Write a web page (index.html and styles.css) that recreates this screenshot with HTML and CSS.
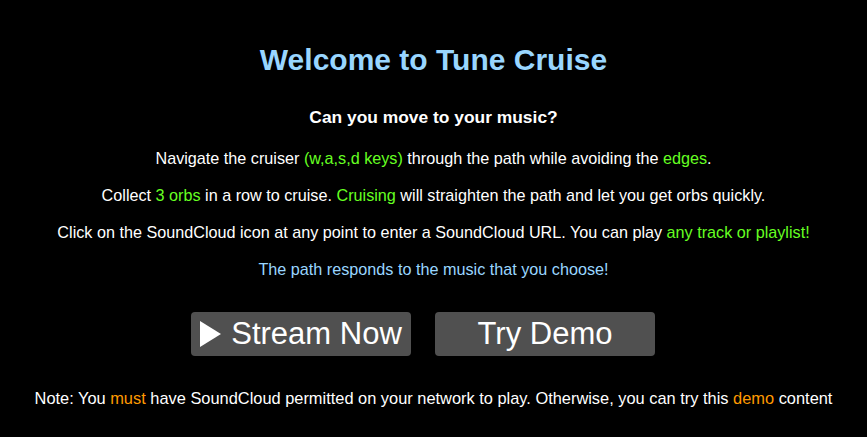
FILE: index.html
```html
<!DOCTYPE html>
<html>
<head>
<meta charset="utf-8">
<link rel="stylesheet" href="styles.css">
</head>
<body>
<main class="intro">
  <h1 class="title">Welcome to Tune Cruise</h1>
  <h2 class="subtitle">Can you move to your music?</h2>
  <p class="line first">Navigate the cruiser <span class="green">(w,a,s,d keys)</span> through the path while avoiding the <span class="green">edges</span>.</p>
  <p class="line">Collect <span class="green">3 orbs</span> in a row to cruise. <span class="green">Cruising</span> will straighten the path and let you get orbs quickly.</p>
  <p class="line">Click on the SoundCloud icon at any point to enter a SoundCloud URL. You can play <span class="green">any track or playlist!</span></p>
  <p class="line blue">The path responds to the music that you choose!</p>
  <div class="buttons">
    <button class="btn"><svg class="play" width="21" height="26" viewBox="0 0 21 26"><polygon points="0,0 21,13 0,26" fill="#fff"/></svg>Stream Now</button>
    <button class="btn">Try Demo</button>
  </div>
  <p class="note">Note: You <span class="orange">must</span> have SoundCloud permitted on your network to play. Otherwise, you can try this <span class="orange">demo</span> content</p>
</main>
</body>
</html>
```
FILE: styles.css
```css
html, body {
  margin: 0;
  background: #000;
  color: #fff;
  font-family: "Liberation Sans", Arial, sans-serif;
}
.intro {
  display: flex;
  flex-direction: column;
  align-items: center;
  padding-top: 40px;
}
.title {
  margin: 0;
  font-size: 30px;
  font-weight: bold;
  color: #99d6ff;
  line-height: 40px;
}
.subtitle {
  margin: 26px 0 0;
  font-size: 17.4px;
  font-weight: bold;
  line-height: 22px;
}
.line {
  margin: 0;
  font-size: 16.2px;
  line-height: 37px;
}
.line.first { margin-top: 12px; }
.green { color: #66ff22; }
.blue { color: #99d6ff; }
.orange { color: #ff9900; }
.buttons {
  display: flex;
  gap: 24px;
  margin-top: 24px;
  padding-right: 21px;
}
.btn {
  width: 220px;
  height: 44px;
  background: #505050;
  border: none;
  border-radius: 4px;
  color: #fff;
  font-family: inherit;
  font-size: 31px;
  display: flex;
  align-items: center;
  justify-content: center;
  padding: 0;
}
.play { margin-right: 10px; }
.note {
  margin: 32px 0 0;
  font-size: 16.4px;
  line-height: 20px;
}
```
